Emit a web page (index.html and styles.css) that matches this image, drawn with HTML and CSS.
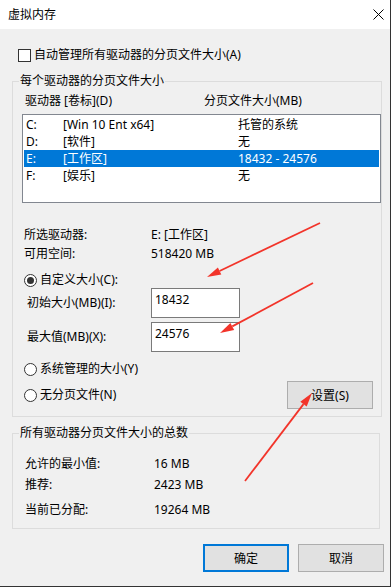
FILE: index.html
```html
<!DOCTYPE html>
<html>
<head>
    <title>虚拟内存</title>
    <link rel="stylesheet" href="styles.css">
</head>
<body>
    <div class="window">
        <div class="titlebar">
            <span class="title">虚拟内存</span>
            <svg class="close" width="11" height="11" viewBox="0 0 11 11"><path d="M0.5 0.5 L10.5 10.5 M10.5 0.5 L0.5 10.5" stroke="#000" stroke-width="1" fill="none"/></svg>
        </div>
        <div class="content">
            <div class="check-row"><span class="checkbox"></span>自动管理所有驱动器的分页文件大小(A)</div>

            <fieldset class="group drives">
                <legend>每个驱动器的分页文件大小</legend>
                <div class="list-head"><span class="col-drive">驱动器 [卷标](D)</span><span>分页文件大小(MB)</span></div>
                <div class="listbox">
                    <div class="row"><span class="c1">C:</span><span class="c2">[Win 10 Ent x64]</span><span>托管的系统</span></div>
                    <div class="row"><span class="c1">D:</span><span class="c2">[软件]</span><span>无</span></div>
                    <div class="row selected"><span class="c1">E:</span><span class="c2">[工作区]</span><span>18432 - 24576</span></div>
                    <div class="row"><span class="c1">F:</span><span class="c2">[娱乐]</span><span>无</span></div>
                </div>

                <div class="info">
                    <div class="info-row"><span class="info-label">所选驱动器:</span><span>E: [工作区]</span></div>
                    <div class="info-row"><span class="info-label">可用空间:</span><span>518420 MB</span></div>
                </div>

                <div class="radio-row custom"><span class="radio checked"></span>自定义大小(C):</div>
                <div class="size-row"><span class="size-label">初始大小(MB)(I):</span><div class="textbox">18432</div></div>
                <div class="size-row second"><span class="size-label">最大值(MB)(X):</span><div class="textbox">24576</div></div>
                <div class="radio-row system"><span class="radio"></span>系统管理的大小(Y)</div>
                <div class="radio-row none">
                    <span class="radio-label"><span class="radio"></span>无分页文件(N)</span>
                    <button class="btn set">设置(S)</button>
                </div>
            </fieldset>

            <fieldset class="group totals">
                <legend>所有驱动器分页文件大小的总数</legend>
                <div class="total-row first"><span class="total-label">允许的最小值:</span><span>16 MB</span></div>
                <div class="total-row second"><span class="total-label">推荐:</span><span>2423 MB</span></div>
                <div class="total-row third"><span class="total-label">当前已分配:</span><span>19264 MB</span></div>
            </fieldset>

            <div class="footer">
                <button class="btn default">确定</button>
                <button class="btn">取消</button>
            </div>
        </div>

        <!-- red annotation arrows -->
        <svg class="arrows" width="391" height="587" viewBox="0 0 391 587">
            <g stroke="#f2342a" stroke-width="1.8" fill="none">
                <line x1="320" y1="223" x2="219.6" y2="271"/>
                <line x1="313" y1="283" x2="232.3" y2="326.4"/>
                <line x1="245" y1="481" x2="303.5" y2="404.1"/>
            </g>
            <g fill="#f2342a">
                <polygon points="207,277 221.3,274.6 217.9,267.4"/>
                <polygon points="220,333 234.2,329.9 230.4,322.9"/>
                <polygon points="312,393 306.7,406.6 300.3,401.7"/>
            </g>
        </svg>
    </div>
</body>
</html>
```

FILE: styles.css
```css
body { margin: 0; background: #f0f0f0; font-family: "Noto Sans", "Noto Sans CJK SC", sans-serif; font-size: 12px; color: #000; }
.window { position: relative; width: 391px; height: 587px; box-sizing: border-box; background: #f0f0f0; border-right: 1px solid #333; border-bottom: 1px solid #333; }
.titlebar { height: 29px; background: #fff; display: flex; align-items: center; justify-content: space-between; padding: 0 6px 0 8px; }
.title { line-height: 16px; }
.close { margin-top: -1px; }

.content { padding: 0 10px 0 12px; }
.check-row { display: flex; align-items: center; height: 16px; line-height: 16px; margin: 18px 0 0 6px; }
.checkbox { width: 13px; height: 13px; box-sizing: border-box; border: 1px solid #333; background: #fff; margin-right: 3px; }

.group { margin: 0; border: 1px solid #dcdcdc; padding: 0 0 0 11px; width: 368px; box-sizing: border-box; }
.group legend { padding: 0 1px; margin-left: -5px; line-height: 16px; }
.drives { margin-top: 10px; padding-bottom: 7px; }

.list-head { display: flex; line-height: 16px; margin-top: 4px; padding-left: 1px; }
.col-drive { width: 179px; }

.listbox { margin: 5px 0 0 -2px; width: 359px; height: 89px; box-sizing: border-box; border: 1px solid #828790; background: #fff; padding: 1px; }
.row { display: flex; height: 17px; line-height: 17px; padding-left: 2px; }
.row.selected { background: #0078d7; color: #fff; }
.c1 { width: 37px; }
.c2 { width: 175px; }

.info { margin-top: 22px; }
.info-row { display: flex; height: 19px; line-height: 19px; }
.info-label { width: 127px; }

.radio-row { display: flex; align-items: center; height: 16px; line-height: 16px; }
.radio-row.custom { margin-top: 9px; }
.radio-row.system { margin-top: 9px; }
.radio-row.none { margin-top: 4px; height: 28px; justify-content: space-between; }
.radio-label { display: flex; align-items: center; }
.radio { width: 13px; height: 13px; box-sizing: border-box; border: 1px solid #333; border-radius: 50%; background: #fff; margin-right: 3px; display: flex; align-items: center; justify-content: center; }
.radio.checked::after { content: ""; width: 7px; height: 7px; border-radius: 50%; background: #333; }

.size-row { display: flex; align-items: center; }
.size-row.second { margin-top: 4px; }
.size-label { width: 124px; padding-left: 3px; padding-bottom: 3px; }
.textbox { width: 89px; height: 30px; box-sizing: border-box; border: 1px solid #7a7a7a; background: #fff; padding: 2px 3px; line-height: 18px; }

.btn { width: 86px; height: 28px; box-sizing: border-box; border: 1px solid #adadad; background: #e1e1e1; font-family: inherit; font-size: 12px; color: #000; padding: 0; }
.btn.set { margin-right: 8px; }
.btn.default { border: 2px solid #0078d7; }

.totals { margin-top: 8px; padding-bottom: 10px; }
.total-row { display: flex; line-height: 16px; padding-left: 1px; }
.total-row.first { margin-top: 15px; }
.total-row.second { margin-top: 5px; }
.total-row.third { margin-top: 9px; }
.total-label { width: 129px; }

.footer { display: flex; justify-content: flex-end; gap: 9px; margin: 15px -4px 0 0; }

.arrows { position: absolute; left: 0; top: 0; pointer-events: none; }
```
